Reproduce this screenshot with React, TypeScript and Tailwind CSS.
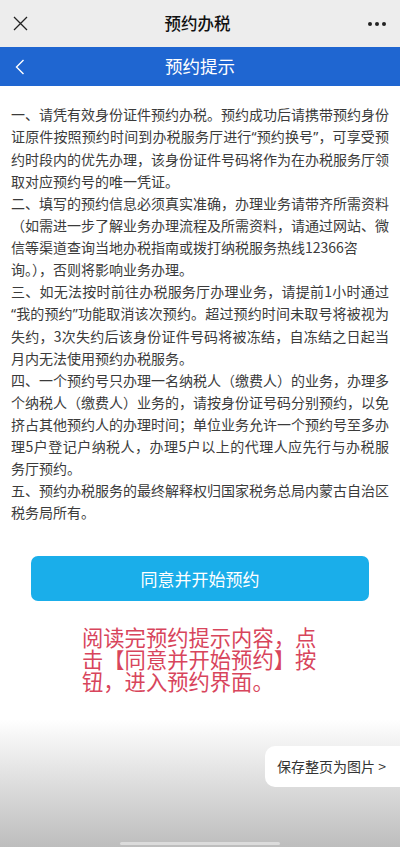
import React from 'react'

type Line = { text: string; full?: boolean }

const PARAGRAPHS: Line[][] = [
  [
    { text: '一、请凭有效身份证件预约办税。预约成功后请携带预约身份', full: true },
    { text: '证原件按照预约时间到办税服务厅进行“预约换号”，可享受预', full: true },
    { text: '约时段内的优先办理，该身份证件号码将作为在办税服务厅领', full: true },
    { text: '取对应预约号的唯一凭证。' },
  ],
  [
    { text: '二、填写的预约信息必须真实准确，办理业务请带齐所需资料', full: true },
    { text: '（如需进一步了解业务办理流程及所需资料，请通过网站、微', full: true },
    { text: '信等渠道查询当地办税指南或拨打纳税服务热线12366咨' },
    { text: '询。），否则将影响业务办理。' },
  ],
  [
    { text: '三、如无法按时前往办税服务厅办理业务，请提前1小时通过', full: true },
    { text: '“我的预约”功能取消该次预约。超过预约时间未取号将被视为', full: true },
    { text: '失约，3次失约后该身份证件号码将被冻结，自冻结之日起当', full: true },
    { text: '月内无法使用预约办税服务。' },
  ],
  [
    { text: '四、一个预约号只办理一名纳税人（缴费人）的业务，办理多', full: true },
    { text: '个纳税人（缴费人）业务的，请按身份证号码分别预约，以免', full: true },
    { text: '挤占其他预约人的办理时间；单位业务允许一个预约号至多办', full: true },
    { text: '理5户登记户纳税人，办理5户以上的代理人应先行与办税服', full: true },
    { text: '务厅预约。' },
  ],
  [
    { text: '五、预约办税服务的最终解释权归国家税务总局内蒙古自治区', full: true },
    { text: '税务局所有。' },
  ],
]

const FONT = "font-['Noto_Sans_CJK_SC','Noto_Sans',sans-serif]"

// curly quotes get the narrow latin glyph, like the phone renders them
function renderLine(text: string) {
  return text.split(/([“”])/).map((part, i) =>
    part === '“' || part === '”' ? (
      <span key={i} className="font-['Noto_Sans',sans-serif]">
        {part}
      </span>
    ) : (
      part
    ),
  )
}

export default function App() {
  return (
    <div className={`flex h-[847px] w-[400px] flex-col overflow-hidden bg-white ${FONT}`}>
      {/* wechat title bar */}
      <div className="flex h-[47px] shrink-0 items-center justify-between bg-[#ededed] px-[13px]">
        <svg width="15" height="15" viewBox="0 0 15 15" className="text-[#222]">
          <path d="M1 1L14 14M14 1L1 14" stroke="currentColor" strokeWidth="1.3" />
        </svg>
        <span className="text-[16.5px] font-medium text-[#111]">预约办税</span>
        <svg width="20" height="6" viewBox="0 0 20 6" className="text-[#222]">
          <circle cx="3" cy="3" r="2" fill="currentColor" />
          <circle cx="10" cy="3" r="2" fill="currentColor" />
          <circle cx="17" cy="3" r="2" fill="currentColor" />
        </svg>
      </div>

      {/* page header */}
      <div className="relative flex h-[39px] shrink-0 items-center justify-center bg-[#1f66d1]">
        <svg width="10" height="16" viewBox="0 0 10 16" className="absolute left-[15px] text-white">
          <path d="M8.5 1L1.5 8L8.5 15" stroke="currentColor" strokeWidth="1.4" fill="none" />
        </svg>
        <span className="text-[17.5px] text-white">预约提示</span>
      </div>

      {/* notice text */}
      <div className="shrink-0 px-[11px] pt-[17px] text-[14px] leading-[22px] text-[#3b3b3b]">
        {PARAGRAPHS.map((para, i) => (
          <div key={i}>
            {para.map((line, j) => (
              <div
                key={j}
                className={`whitespace-nowrap ${line.full ? 'text-justify [text-align-last:justify]' : ''}`}
              >
                {renderLine(line.text)}
              </div>
            ))}
          </div>
        ))}
      </div>

      <div className="mt-[33px] flex shrink-0 justify-center">
        <button className="h-[45px] w-[338px] rounded-[7px] bg-[#1aaeea] text-[17px] text-white">
          同意并开始预约
        </button>
      </div>

      <div className="mx-auto mt-[25px] w-[236px] shrink-0 text-[21.3px] leading-[22px] text-[#d8455c]">
        <div className="whitespace-nowrap">阅读完预约提示内容，点</div>
        <div className="whitespace-nowrap">击【同意并开始预约】按</div>
        <div className="whitespace-nowrap">钮，进入预约界面。</div>
      </div>

      {/* bottom fade with save button */}
      <div className="mt-[27px] flex flex-1 flex-col bg-gradient-to-b from-white to-[#bdbdbd]">
        <div className="mt-[27px] flex justify-end">
          <div className="flex h-[41px] w-[135px] items-center rounded-l-[10px] bg-white pl-[12px] text-[14px] text-[#333]">
            保存整页为图片 &gt;
          </div>
        </div>
        <div className="mt-auto flex justify-center pb-[2px]">
          <div className="h-[3px] w-[160px] rounded-full bg-[#dcdcdc]" />
        </div>
      </div>
    </div>
  )
}
